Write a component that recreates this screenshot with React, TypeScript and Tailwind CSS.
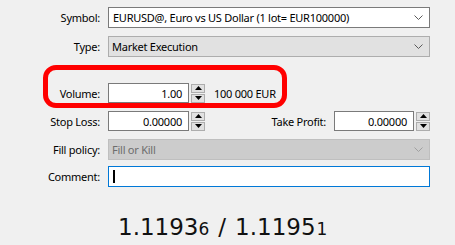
import React from "react";

const Chevron = ({ color = "#5a5a5a" }: { color?: string }) => (
  <svg width="9" height="5" viewBox="0 0 9 5" className="shrink-0">
    <path d="M0.5 0.5 L4.5 4.5 L8.5 0.5" fill="none" stroke={color} strokeWidth="1" />
  </svg>
);

const Spinner = () => (
  <div className="ml-[2px] flex h-[19px] w-[14px] flex-col justify-between">
    <div className="flex h-[9px] items-center justify-center border border-[#adadad] bg-[#e1e1e1]">
      <svg width="7" height="4" viewBox="0 0 7 4">
        <path d="M3.5 0 L7 4 L0 4 Z" fill="#000" />
      </svg>
    </div>
    <div className="flex h-[9px] items-center justify-center border border-[#adadad] bg-[#e1e1e1]">
      <svg width="7" height="4" viewBox="0 0 7 4">
        <path d="M0 0 L7 0 L3.5 4 Z" fill="#000" />
      </svg>
    </div>
  </div>
);

function Label({ children, w = "w-[100px]" }: { children: React.ReactNode; w?: string }) {
  return <div className={`${w} shrink-0 text-right text-black`}>{children}</div>;
}

export default function App() {
  return (
    <div
      className="relative h-[245px] w-[455px] overflow-hidden bg-[#f0f0f0] text-[11px] leading-none tracking-[-0.25px]"
      style={{ fontFamily: "'Noto Sans', 'Liberation Sans', sans-serif" }}
    >
      <div className="flex flex-col pt-[7px]">
        {/* Symbol */}
        <div className="flex items-center">
          <Label>Symbol:</Label>
          <div className="ml-2 flex h-[21px] w-[322px] items-center justify-between border border-[#7a7a7a] bg-white pl-[4px] pr-[6px]">
            <span>EURUSD@, Euro vs US Dollar (1 lot= EUR100000)</span>
            <Chevron />
          </div>
        </div>

        {/* Type */}
        <div className="mt-[8px] flex items-center">
          <Label>Type:</Label>
          <div className="ml-2 flex h-[21px] w-[322px] items-center justify-between border border-[#adadad] bg-[#e1e1e1] pl-[3px] pr-[6px]">
            <span>Market Execution</span>
            <Chevron />
          </div>
        </div>

        {/* Volume */}
        <div className="mt-[26px] flex items-center">
          <Label>Volume:</Label>
          <div className="ml-2 flex h-[20px] w-[81px] items-center justify-end border border-[#7a7a7a] bg-white pr-[6px]">
            1.00
          </div>
          <Spinner />
          <span className="ml-[9px]">100 000 EUR</span>
        </div>

        {/* Stop Loss / Take Profit */}
        <div className="mt-[8px] flex items-center">
          <Label>Stop Loss:</Label>
          <div className="ml-2 flex h-[20px] w-[81px] items-center justify-end border border-[#7a7a7a] bg-white pr-[6px]">
            0.00000
          </div>
          <Spinner />
          <Label w="w-[121px]">Take Profit:</Label>
          <div className="ml-2 flex h-[20px] w-[80px] items-center justify-end border border-[#7a7a7a] bg-white pr-[6px]">
            0.00000
          </div>
          <Spinner />
        </div>

        {/* Fill policy */}
        <div className="mt-[8px] flex items-center">
          <Label>Fill policy:</Label>
          <div className="ml-2 flex h-[21px] w-[322px] items-center justify-between border border-[#bfbfbf] bg-[#cccccc] pl-[3px] pr-[6px] text-[#6d6d6d]">
            <span>Fill or Kill</span>
            <Chevron color="#a0a0a0" />
          </div>
        </div>

        {/* Comment */}
        <div className="mt-[6px] flex items-center">
          <Label>Comment:</Label>
          <div className="ml-2 flex h-[21px] w-[322px] items-center border border-[#0078d7] bg-white pl-[4px]">
            <div className="h-[13px] w-[2px] bg-black" />
          </div>
        </div>

        {/* Prices */}
        <div
          className="mt-[29px] flex items-baseline pl-[118px] text-[23px] tracking-normal text-[#111]"
          style={{ fontFamily: "'DejaVu Sans', Verdana, sans-serif" }}
        >
          <span>1.1193</span>
          <span className="text-[17px]">6</span>
          <span className="mx-[9px]">/</span>
          <span>1.1195</span>
          <span className="ml-[1px] text-[17px]">1</span>
        </div>
      </div>

      {/* red highlight around volume */}
      <div className="pointer-events-none absolute left-[43px] top-[65px] h-[43px] w-[244px] rounded-[13px] border-[5px] border-[#ff0000]" />
    </div>
  );
}
